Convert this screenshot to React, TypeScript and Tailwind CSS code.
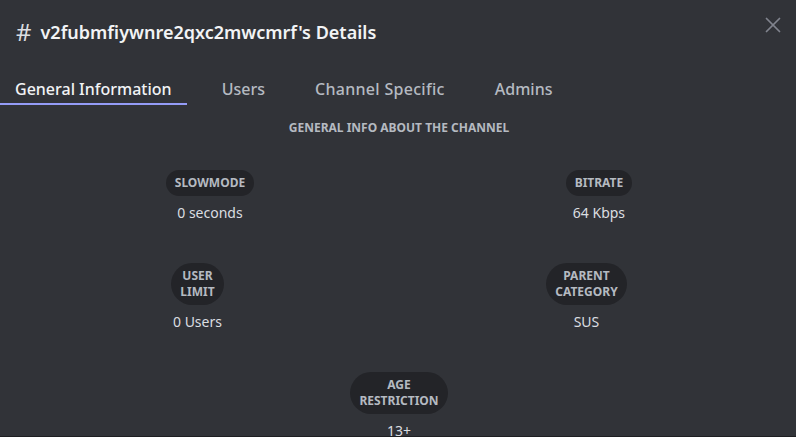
import { X } from "lucide-react";

const tabs = ["General Information", "Users", "Channel Specific", "Admins"];

const rows: { label: string[]; value: string }[][] = [
  [
    { label: ["Slowmode"], value: "0 seconds" },
    { label: ["Bitrate"], value: "64 Kbps" },
  ],
  [
    { label: ["User", "Limit"], value: "0 Users" },
    { label: ["Parent", "Category"], value: "SUS" },
  ],
  [{ label: ["Age", "Restriction"], value: "13+" }],
];

function InfoItem({ label, value }: { label: string[]; value: string }) {
  return (
    <div className="flex flex-col items-center">
      <div className="rounded-full bg-[#232428] px-[9px] py-[5px] text-center text-[12px] font-bold uppercase leading-4 text-[#b5bac1]">
        {label.map((l) => (
          <div key={l}>{l}</div>
        ))}
      </div>
      <div className="mt-[7px] text-[14px] leading-5 text-[#dbdee1]">{value}</div>
    </div>
  );
}

export default function App() {
  return (
    <div
      className="flex h-[437px] w-full flex-col overflow-hidden bg-[#313338]"
      style={{ fontFamily: '"Noto Sans", Inter, sans-serif' }}
    >
      {/* Header */}
      <div className="flex items-start justify-between pl-4 pr-[10px] pt-[18px]">
        <h1 className="flex items-center gap-[9px] text-[18px] font-semibold leading-7 text-[#f2f3f5]">
          <span className="text-[24px] font-normal text-[#dbdee1]">#</span>
          v2fubmfiywnre2qxc2mwcmrf's Details
        </h1>
        <button className="-mt-[6px] text-[#80848e]">
          <X size={26} strokeWidth={1.6} />
        </button>
      </div>

      {/* Tabs */}
      <div className="mt-[31px] flex gap-5">
        {tabs.map((tab, i) => (
          <div
            key={tab}
            className={
              i === 0
                ? "border-b-2 border-[#949cf7] px-[15px] pb-[2px] text-[16px] font-medium leading-6 text-[#f2f3f5]"
                : i === 2
                  ? "border-b-2 border-transparent px-[15px] pb-[2px] text-[16px] font-medium leading-6 tracking-[0.3px] text-[#b5bac1]"
                  : "border-b-2 border-transparent px-[15px] pb-[2px] text-[16px] font-medium leading-6 text-[#b5bac1]"
            }
          >
            {tab}
          </div>
        ))}
      </div>

      {/* Content */}
      <div className="flex-1 overflow-hidden pl-[10px] pr-[8px]">
        <h2 className="mt-[15px] text-center text-[12px] font-bold uppercase leading-4 text-[#b5bac1]">
          General info about the channel
        </h2>
        <div className="mt-[34px] flex flex-col gap-10">
          {rows.map((row, i) => (
            <div key={i} className="flex justify-around">
              {row.map((item) => (
                <InfoItem key={item.value} label={item.label} value={item.value} />
              ))}
            </div>
          ))}
        </div>
      </div>
      <div className="h-[1px] shrink-0 bg-[#1e1f22]" />
    </div>
  );
}
